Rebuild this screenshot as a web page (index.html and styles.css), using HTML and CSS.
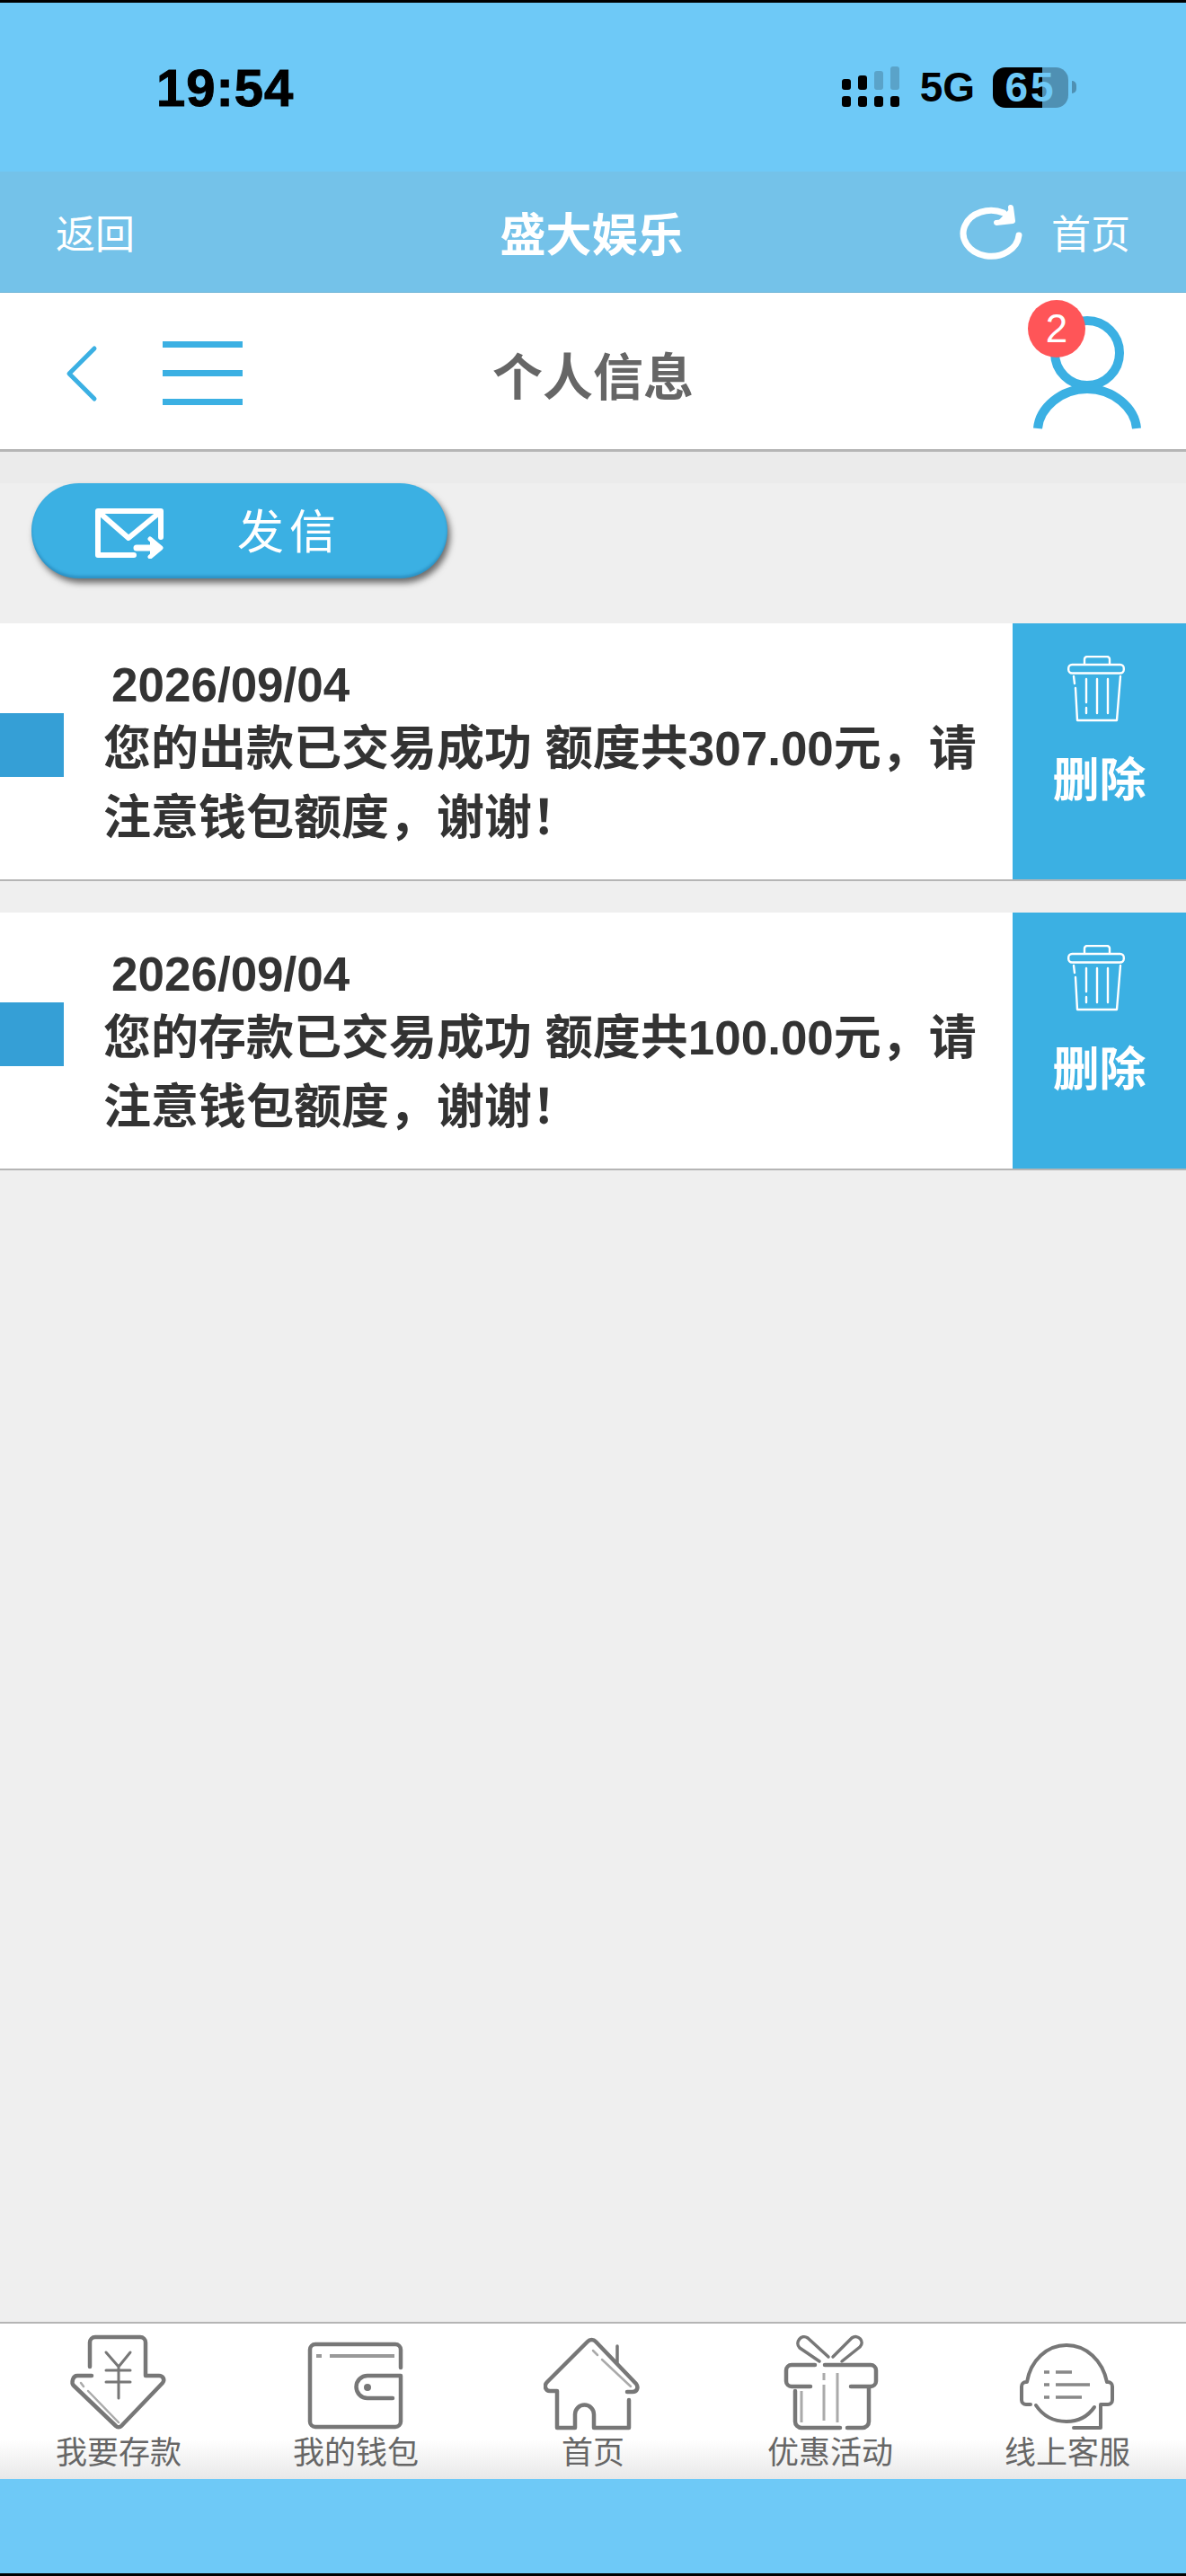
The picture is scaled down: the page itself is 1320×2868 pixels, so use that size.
FILE: index.html
```html
<!DOCTYPE html>
<html lang="zh-CN">
<head>
<meta charset="utf-8">
<title>个人信息</title>
<link rel="stylesheet" href="styles.css">
</head>
<body>
<div class="status">
	<span class="time">19:54</span>
	<div class="status-right">
		<svg class="signal" width="66" height="46" viewBox="0 0 66 46">
			<g fill="#000">
				<rect x="1" y="33" width="10" height="12" rx="3"/><rect x="19" y="33" width="10" height="12" rx="3"/>
				<rect x="37" y="33" width="10" height="12" rx="3"/><rect x="55" y="33" width="10" height="12" rx="3"/>
				<rect x="1" y="14" width="10" height="12" rx="3"/><rect x="19" y="10" width="10" height="16" rx="3"/>
			</g>
			<g fill="#5aa3c9">
				<rect x="37" y="5" width="10" height="21" rx="3"/><rect x="55" y="0" width="10" height="26" rx="3"/>
			</g>
		</svg>
		<span class="net">5G</span>
		<span class="battery">65</span>
		<span class="battery-nub"></span>
	</div>
</div>

<div class="topbar">
	<span class="topbar-left">返回</span>
	<span class="topbar-title">盛大娱乐</span>
	<div class="topbar-right">
		<svg width="72" height="64" viewBox="0 0 72 64" fill="none" stroke="#fff" stroke-width="7" stroke-linecap="round" stroke-linejoin="round">
			<path d="M67 36A31 25.5 0 1 1 50 11"/>
			<path d="M58 5L60 20L42 22" stroke-width="6" fill="#fff"/>
		</svg>
		<span>首页</span>
	</div>
</div>

<div class="nav">
	<div class="nav-left">
		<svg width="40" height="64" viewBox="0 0 40 64" fill="none" stroke="#3bb0e3" stroke-width="5" stroke-linecap="round" stroke-linejoin="round">
			<path d="M33 4L5 32L33 60"/>
		</svg>
		<svg width="89" height="72" viewBox="0 0 89 72" fill="#3bb0e3">
			<rect x="0" y="0" width="89" height="7"/>
			<rect x="0" y="32" width="89" height="7"/>
			<rect x="0" y="64" width="89" height="7"/>
		</svg>
	</div>
	<span class="nav-title">个人信息</span>
	<div class="nav-user">
		<svg width="130" height="130" viewBox="0 0 130 130" fill="none" stroke="#3bb0e3" stroke-width="10">
			<circle cx="65" cy="43" r="36"/>
			<path d="M10 127C12 104 36 83 65 83S118 104 120 127"/>
		</svg>
		<span class="badge">2</span>
	</div>
</div>

<div class="strip"></div>
<div class="tools">
	<div class="send-btn">
		<svg width="78" height="58" viewBox="0 0 78 58" fill="none" stroke="#fff" stroke-width="6" stroke-linejoin="round" stroke-linecap="round">
			<path d="M74 34V5H4V54H44"/>
			<path d="M6 7L38 35L72 7"/>
			<path d="M47 46H66" stroke-width="7"/>
			<path d="M62 36L74 46L62 56" stroke-width="5" fill="#fff"/>
		</svg>
		<span>发信</span>
	</div>
</div>

<div class="msg-list">
	<div class="msg">
		<div class="msg-mark"></div>
		<div class="msg-body">
			<div class="msg-date">2026/09/04</div>
			<div class="msg-text">您的出款已交易成功 额度共307.00元，请注意钱包额度，谢谢！</div>
		</div>
		<div class="msg-del">
			<svg width="64" height="74" viewBox="0 0 64 74" fill="none" stroke="#fff" stroke-width="2.4" stroke-linecap="round" stroke-linejoin="round">
				<path d="M19 9V4a3 3 0 0 1 3-3H44a3 3 0 0 1 3 3V9"/>
				<rect x="1.2" y="10" width="61.6" height="9.5" rx="4"/>
				<path d="M7 23L8 31M9 36L11 72H55L59 23"/>
				<path d="M21 26V52M21 58V64M33 26V64M45 26V64"/>
			</svg>
			<span>删除</span>
		</div>
	</div>
	<div class="msg">
		<div class="msg-mark"></div>
		<div class="msg-body">
			<div class="msg-date">2026/09/04</div>
			<div class="msg-text">您的存款已交易成功 额度共100.00元，请注意钱包额度，谢谢！</div>
		</div>
		<div class="msg-del">
			<svg width="64" height="74" viewBox="0 0 64 74" fill="none" stroke="#fff" stroke-width="2.4" stroke-linecap="round" stroke-linejoin="round">
				<path d="M19 9V4a3 3 0 0 1 3-3H44a3 3 0 0 1 3 3V9"/>
				<rect x="1.2" y="10" width="61.6" height="9.5" rx="4"/>
				<path d="M7 23L8 31M9 36L11 72H55L59 23"/>
				<path d="M21 26V52M21 58V64M33 26V64M45 26V64"/>
			</svg>
			<span>删除</span>
		</div>
	</div>
</div>

<div class="tabs">
	<div class="tab">
		<svg viewBox="0 0 110 110" width="110" height="110" fill="none" stroke="#777" stroke-width="4.5" stroke-linecap="round" stroke-linejoin="round">
			<path d="M23 37V10a6 6 0 0 1 6-6H79a6 6 0 0 1 6 6V47H100c4 0 7 4 4 8L58 103a4 4 0 0 1-6 0L5 58c-3-3-1-11 4-11H25"/>
			<path d="M13 55L16 59M21 64L55 99" stroke="#aaa" stroke-width="2.5"/>
			<path d="M41 21L55 37L68 21M55 37V72M41 41H68M41 54H68" stroke-width="3"/>
		</svg>
		<span>我要存款</span>
	</div>
	<div class="tab">
		<svg viewBox="0 0 110 110" width="110" height="110" fill="none" stroke="#777" stroke-width="4.5" stroke-linecap="round" stroke-linejoin="round">
			<path d="M105 38V18a6 6 0 0 0-6-6H10a6 6 0 0 0-6 6V98a6 6 0 0 0 6 6H99a6 6 0 0 0 6-6V47H68a12.5 12.5 0 0 0 0 25H96"/>
			<circle cx="68" cy="60" r="4" fill="#777" stroke="none"/>
			<path d="M11 25H17M26 25H98" stroke="#999" stroke-width="4" stroke-linecap="butt"/>
		</svg>
		<span>我的钱包</span>
	</div>
	<div class="tab">
		<svg viewBox="0 0 110 110" width="110" height="110" fill="none" stroke="#777" stroke-width="4.5" stroke-linecap="round" stroke-linejoin="round">
			<path d="M93 65h6c5 0 7-5 4-9L58 9a6 6 0 0 0-9 0L4 54c-4 4-2 10 3 10H15V105H35V90a10.5 10.5 0 0 1 21 0V105H95V74"/>
			<path d="M82 14V32" stroke-width="3.5"/>
			<path d="M55 19L60 24M65 29L97 59" stroke="#aaa" stroke-width="2.5"/>
		</svg>
		<span>首页</span>
	</div>
	<div class="tab">
		<svg viewBox="0 0 110 110" width="110" height="110" fill="none" stroke="#777" stroke-width="4.5" stroke-linecap="round" stroke-linejoin="round">
			<path d="M38 35H12a6 6 0 0 0-6 6V53a6 6 0 0 0 6 6H33M49 35H100a6 6 0 0 1 6 6V53a6 6 0 0 1-6 6H78"/>
			<path d="M16 64V98a7 7 0 0 0 7 7H66M74 105H91a7 7 0 0 0 7-7V60"/>
			<path d="M43 31L21 16C15 10 23 0 30 5L53 26M58 26L79 5C86 0 94 9 88 15L68 31" stroke-width="3.5"/>
			<path d="M48 44V52M48 57V97M63 44V99M23 64V99" stroke="#aaa" stroke-width="3" stroke-linecap="butt"/>
		</svg>
		<span>优惠活动</span>
	</div>
	<div class="tab">
		<svg viewBox="0 0 110 110" width="110" height="110" fill="none" stroke="#777" stroke-width="4" stroke-linecap="round" stroke-linejoin="round">
			<path d="M14 79H9a5 5 0 0 1-5-5V59a5 5 0 0 1 5-5h1C14 30 32 13 54 13S94 30 99 54h1a5 5 0 0 1 5 5V74a5 5 0 0 1-5 5H92V105H62"/>
			<path d="M20 80C28 92 40 98 54 98S78 92 85 82"/>
			<path d="M29 43H35M42 43H60M29 57H35M42 57H80M29 71H35M42 71H71" stroke="#888" stroke-width="3.5" stroke-linecap="butt"/>
		</svg>
		<span>线上客服</span>
	</div>
</div>
<div class="home-bar"></div>
</body>
</html>
```

FILE: styles.css
```css
*{margin:0;padding:0;box-sizing:border-box;}
body{width:1320px;height:2868px;overflow:hidden;display:flex;flex-direction:column;
	background:#efefef;border-top:3px solid #000;border-bottom:3px solid #000;
	font-family:"Liberation Sans","Noto Sans CJK SC",sans-serif;}
svg{display:block;flex:none;}

.status{height:188px;background:#6ec9f7;display:flex;align-items:center;justify-content:space-between;
	padding:0 122px 0 174px;color:#000;}
.time{font-size:58px;font-weight:700;letter-spacing:1px;-webkit-text-stroke:1px #000;}
.status-right{display:flex;align-items:center;}
.net{font-size:46px;font-weight:700;margin-left:22px;}
.battery{width:84px;height:45px;border-radius:14px;margin-left:20px;
	background:linear-gradient(90deg,#000 65%,#4f90b3 65%);color:#6ec9f7;
	font-size:46px;font-weight:700;letter-spacing:3px;line-height:45px;text-align:center;}
.battery-nub{width:5px;height:14px;margin-left:4px;border-radius:0 5px 5px 0;background:#4f90b3;}

.topbar{height:135px;background:#74c2e9;border-bottom:1px solid #6fb5d8;color:#fff;
	display:grid;grid-template-columns:1fr auto 1fr;align-items:center;padding:0 62px;font-size:44px;}
.topbar-title{font-size:51px;font-weight:700;padding-right:3px;}
.topbar-right{display:flex;align-items:center;justify-content:flex-end;gap:31px;}

.nav{height:177px;background:#fff;border-bottom:3px solid #b5b5b5;
	display:grid;grid-template-columns:1fr auto 1fr;align-items:center;padding:0 45px;}
.nav-left{display:flex;align-items:center;gap:69px;margin-left:27px;padding-top:6px;}
.nav-title{font-size:56px;font-weight:700;color:#666;padding-top:4px;}
.nav-user{justify-self:end;position:relative;margin-top:4px;}
.badge{position:absolute;left:-1px;top:-16px;width:64px;height:64px;border-radius:50%;background:#ff5558;
	color:#fff;font-size:44px;line-height:64px;text-align:center;}

.strip{height:35px;background:#ebebeb;}
.tools{height:156px;padding-left:35px;}
.send-btn{width:463px;height:106px;border-radius:53px;background:#3bb0e3;color:#fff;
	display:flex;align-items:center;padding-left:70px;gap:81px;
	box-shadow:3px 5px 7px rgba(0,0,0,.55),inset 0 -3px 3px rgba(0,60,110,.25);
	font-size:52px;}
.send-btn svg{margin-top:4px;}
.send-btn span{letter-spacing:6px;margin-top:-6px;}

.msg-list{flex:1;}
.msg{height:287px;margin-bottom:35px;background:#fff;border-bottom:2px solid #b5b5b5;
	display:flex;color:#333;}
.msg-mark{width:71px;height:71px;flex:none;background:#359fd6;margin-top:100px;}
.msg-body{flex:1;padding:37px 0 0 44px;font-weight:700;}
.msg-date{font-size:53px;line-height:64px;padding-left:9px;}
.msg-text{font-size:53px;line-height:77px;width:985px;}
.msg-del{width:193px;flex:none;background:#3bb0e3;color:#fff;display:flex;flex-direction:column;
	align-items:center;padding-top:36px;gap:35px;font-size:52px;font-weight:700;line-height:60px;}
.msg-del svg{margin-right:8px;}

.tabs{height:175px;border-top:2px solid #b5b5b5;display:grid;grid-template-columns:repeat(5,264px);
	background:linear-gradient(#fff 75%,#e8e8e8);}
.tab{display:flex;flex-direction:column;align-items:center;padding-top:11px;color:#666;
	font-size:35px;line-height:40px;}
.tab span{margin-top:3px;}
.home-bar{height:105px;background:#6ec9f7;}
```
